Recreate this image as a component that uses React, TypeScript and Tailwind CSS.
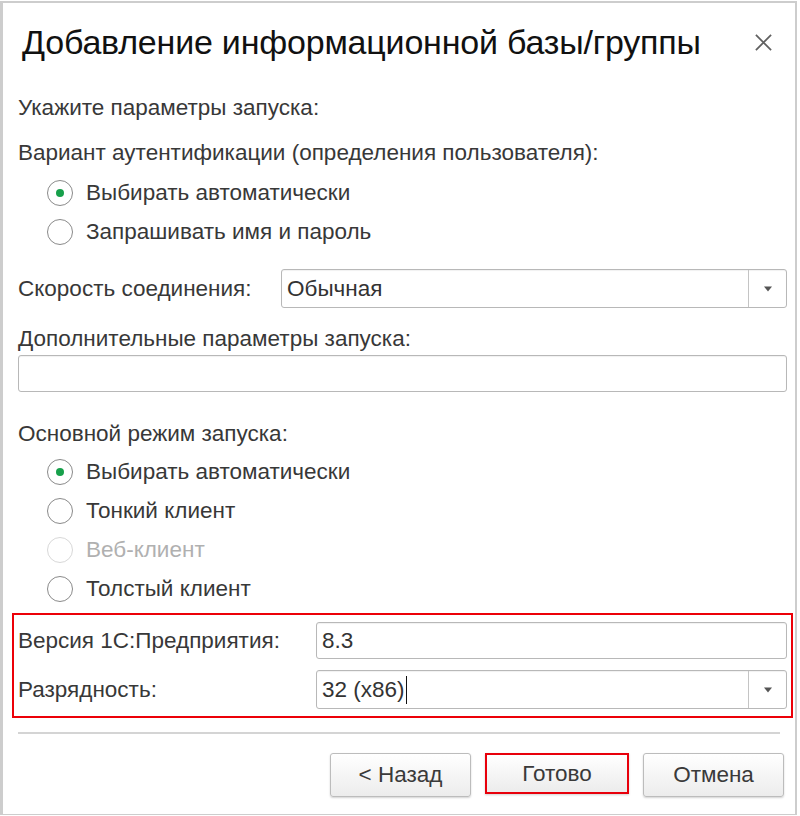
import React from "react";

function Radio({ checked, disabled, label }: { checked?: boolean; disabled?: boolean; label: string }) {
  return (
    <div className="flex items-center h-[39px] pl-[29px]">
      <div
        className={
          "w-[26px] h-[26px] rounded-full border-[1.5px] flex items-center justify-center bg-white " +
          (disabled ? "border-[#d8d8d8]" : "border-[#8a8a8a]")
        }
      >
        {checked && <div className="w-[8px] h-[8px] rounded-full bg-[#17a04b]" />}
      </div>
      <span className={"ml-[13px] text-[22.5px] " + (disabled ? "text-[#b0b0b0]" : "text-[#383838]")}>{label}</span>
    </div>
  );
}

function SelectBox({ value, caret }: { value: string; caret?: boolean }) {
  return (
    <div className="flex-1 flex h-[39px] border border-[#b8b8b8] rounded-[3px] bg-white shadow-[inset_0_1px_1px_rgba(0,0,0,0.06)]">
      <div className="flex-1 flex items-center pl-[5px] text-[22.5px] text-[#333]">
        {value}
        {caret && <span className="inline-block w-[1.5px] h-[28px] bg-[#111] ml-[1px]" />}
      </div>
      <div className="w-[38px] border-l border-[#c4c4c4] flex items-center justify-center">
        <svg width="10" height="6" viewBox="0 0 10 6">
          <path d="M1 0.5 L9 0.5 L5 5.5 Z" fill="#555" />
        </svg>
      </div>
    </div>
  );
}

function TextBox({ value }: { value?: string }) {
  return (
    <div className="flex-1 flex items-center h-[37px] border border-[#b8b8b8] rounded-[3px] bg-white pl-[5px] text-[22.5px] text-[#333] shadow-[inset_0_1px_1px_rgba(0,0,0,0.06)]">
      {value}
    </div>
  );
}

function Button({ label, highlight }: { label: string; highlight?: boolean }) {
  return (
    <div
      className={
        "flex items-center justify-center text-[22.5px] text-[#3a3a3a] bg-gradient-to-b from-[#ffffff] to-[#ececec] shadow-[0_1px_2px_rgba(0,0,0,0.18)] " +
        (highlight ? "w-[144px] h-[41px] border-2 border-[#e8000b]" : "w-[141px] h-[44px] border border-[#bcbcbc] rounded-[3px]")
      }
    >
      {label}
    </div>
  );
}

export default function App() {
  return (
    <div className="w-[800px] h-[816px] bg-white" style={{ fontFamily: '"Liberation Sans", Arial, sans-serif' }}>
      <div className="mt-[1px] mr-[3px] h-[814px] border-l-[3px] border-t-[2px] border-r-[2px] border-b border-[#cdcdcd] flex flex-col">
        <div className="flex items-center h-[78px] pl-[19px] pr-[22px]">
          <div className="flex-1 text-[34px] text-[#111] tracking-[-0.2px]">Добавление информационной базы/группы</div>
          <svg width="19" height="19" viewBox="0 0 20 20">
            <path d="M2 2 L18 18 M18 2 L2 18" stroke="#606060" strokeWidth="1.8" />
          </svg>
        </div>
        <div className="pl-[15px] pr-[8px] flex flex-col">
          <div className="h-[40px] mt-[7px] flex items-center text-[22.5px] text-[#383838]">Укажите параметры запуска:</div>
          <div className="h-[40px] mt-[5px] flex items-center text-[22.5px] text-[#383838]">
            Вариант аутентификации (определения пользователя):
          </div>
          <Radio checked label="Выбирать автоматически" />
          <Radio label="Запрашивать имя и пароль" />
          <div className="flex items-center mt-[18px]">
            <div className="w-[263px] text-[22.5px] text-[#383838]">Скорость соединения:</div>
            <SelectBox value="Обычная" />
          </div>
          <div className="h-[30px] mt-[16px] flex items-center text-[22.5px] text-[#383838]">
            Дополнительные параметры запуска:
          </div>
          <div className="flex mt-[1px]">
            <TextBox />
          </div>
          <div className="h-[36px] mt-[24px] flex items-center text-[22.5px] text-[#383838]">Основной режим запуска:</div>
          <Radio checked label="Выбирать автоматически" />
          <Radio label="Тонкий клиент" />
          <Radio disabled label="Веб-клиент" />
          <Radio label="Толстый клиент" />
        </div>
        <div className="ml-[9px] mr-[2px] mt-[5px] border-2 border-[#ec0008] h-[105px] flex flex-col pl-[4px] pr-[4px] pt-[7px]">
          <div className="flex items-center">
            <div className="w-[298px] text-[22.5px] text-[#383838]">Версия 1С:Предприятия:</div>
            <TextBox value="8.3" />
          </div>
          <div className="flex items-center mt-[11px]">
            <div className="w-[298px] text-[22.5px] text-[#383838]">Разрядность:</div>
            <SelectBox value="32 (x86)" caret />
          </div>
        </div>
        <div className="mx-[15px] mt-[14px] h-[2px] bg-[#d4d4d4]" />
        <div className="flex justify-end items-start gap-[14px] pr-[11px] mt-[19px]">
          <Button label="< Назад" />
          <Button label="Готово" highlight />
          <Button label="Отмена" />
        </div>
      </div>
    </div>
  );
}
